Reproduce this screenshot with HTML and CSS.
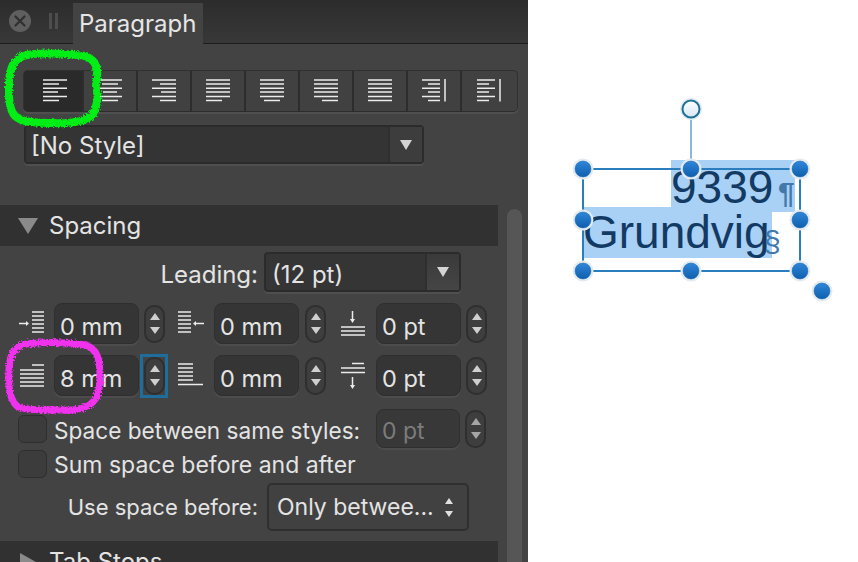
FILE: index.html
```html
<!DOCTYPE html>
<html lang="en">
<head>
<meta charset="utf-8">
<title>Paragraph</title>
<link rel="stylesheet" href="styles.css">
</head>
<body>
<div class="page">
  <aside class="panel">
    <header class="titlebar">
      <span class="close"><svg width="22" height="22" viewBox="0 0 22 22"><path d="M6.500 6.500l9 9M15.500 6.500l-9 9" stroke="#2f2f2f" stroke-width="2.200" stroke-linecap="round"/></svg></span>
      <span class="grip"></span>
      <div class="tab">Paragraph</div>
    </header>

    <div class="top">
      <div class="aligns">
        <button class="al al-first sel"><svg width="24" height="24" viewBox="0 0 24 24"><path d="M0 1h24M0 5h16M0 9.200h24M0 13h15M0 17.500h24M0 21.500h16"/></svg></button>
        <button class="al"><svg width="24" height="24" viewBox="0 0 24 24"><path d="M0 1h24M4 5h16M0 9.200h24M5 13h14M0 17.500h24M4 21.500h16"/></svg></button>
        <button class="al"><svg width="24" height="24" viewBox="0 0 24 24"><path d="M0 1h24M8 5h16M0 9.200h24M9 13h15M0 17.500h24M8 21.500h16"/></svg></button>
        <button class="al"><svg width="24" height="24" viewBox="0 0 24 24"><path d="M0 1h24M0 5h24M0 9.200h24M0 13h24M0 17.500h24M0 21.500h16"/></svg></button>
        <button class="al"><svg width="24" height="24" viewBox="0 0 24 24"><path d="M0 1h24M0 5h24M0 9.200h24M0 13h24M0 17.500h24M4 21.500h16"/></svg></button>
        <button class="al"><svg width="24" height="24" viewBox="0 0 24 24"><path d="M0 1h24M0 5h24M0 9.200h24M0 13h24M0 17.500h24M8 21.500h16"/></svg></button>
        <button class="al"><svg width="24" height="24" viewBox="0 0 24 24"><path d="M0 1h24M0 5h24M0 9.200h24M0 13h24M0 17.500h24M0 21.500h24"/></svg></button>
        <button class="al"><svg width="24" height="24" viewBox="0 0 24 24"><path d="M0 1h18M6 5h12M0 9.200h18M6 13h12M0 17.500h18M6 21.500h12M23 0v22.500"/></svg></button>
        <button class="al al-last"><svg width="24" height="24" viewBox="0 0 24 24"><path d="M0 1h18M0 5h12M0 9.200h18M0 13h12M0 17.500h18M0 21.500h12M23 0v22.500"/></svg></button>
      </div>
      <div class="select style-select">
        <span class="select-value">[No Style]</span>
        <span class="select-arrow"><i class="tri-down"></i></span>
      </div>
    </div>

    <section class="section-head"><i class="tri-open"></i><span>Spacing</span></section>

    <div class="spacing">
      <div class="leading-row">
        <label class="leading-label">Leading:</label>
        <div class="select leading-select">
          <span class="select-value">(12 pt)</span>
          <span class="select-arrow"><i class="tri-down"></i></span>
        </div>
      </div>

      <div class="grid">
        <svg class="ic" width="28" height="28" viewBox="0 0 28 28"><path d="M2 13.500h8M15 2h12M15 6h12M15 10h12M15 14h12M15 18h12M15 22h12"/><path class="fill" d="M12 13.500l-3-2.500v5z"/></svg>
        <div class="field">0 mm</div>
        <div class="stepper"><i class="up"></i><i class="dn"></i></div>
        <svg class="ic" width="28" height="28" viewBox="0 0 28 28"><path d="M1 2h13M1 6h13M1 10h13M1 14h13M1 18h13M1 22h13M18 13.500h9"/><path class="fill" d="M16 13.500l3-2.500v5z"/></svg>
        <div class="field">0 mm</div>
        <div class="stepper st2"><i class="up"></i><i class="dn"></i></div>
        <svg class="ic" width="26" height="28" viewBox="0 0 26 28"><path d="M12.500 1v9M1 17h24M1 21h24M1 25h24"/><path class="fill" d="M12.500 13l-2.500-4h5z"/></svg>
        <div class="field">0 pt</div>
        <div class="stepper"><i class="up"></i><i class="dn"></i></div>

        <svg class="ic" width="28" height="28" viewBox="0 0 28 28"><path d="M15 3h12M3 8h24M3 12h24M3 16h24M3 20h24M3 24h24"/></svg>
        <div class="field">8 mm</div>
        <div class="stepper focus"><i class="up"></i><i class="dn"></i></div>
        <svg class="ic" width="28" height="28" viewBox="0 0 28 28"><path d="M1 2h15M1 6h15M1 10h15M1 14h15M1 18h15M1 22.500h25"/></svg>
        <div class="field">0 mm</div>
        <div class="stepper st2"><i class="up"></i><i class="dn"></i></div>
        <svg class="ic" width="26" height="28" viewBox="0 0 26 28"><path d="M12 1.500h12M1 6h24M1 10.500h24M12.500 15v8"/><path class="fill" d="M12.500 27l-2.500-4h5z"/></svg>
        <div class="field">0 pt</div>
        <div class="stepper"><i class="up"></i><i class="dn"></i></div>
      </div>

      <div class="check-row first">
        <span class="check"></span>
        <span class="check-label">Space between same styles:</span>
        <div class="field off">0 pt</div>
        <div class="stepper off-st"><i class="up"></i><i class="dn"></i></div>
      </div>
      <div class="check-row second">
        <span class="check"></span>
        <span class="check-label">Sum space before and after</span>
      </div>
      <div class="use-row">
        <label class="use-label">Use space before:</label>
        <div class="popup">
          <span>Only betwee...</span>
          <span class="updown"><i class="up"></i><i class="dn"></i></span>
        </div>
      </div>
    </div>

    <section class="section-head closed"><i class="tri-closed"></i><span>Tab Stops</span></section>

    <div class="scrollbar"></div>

    <svg class="scribbles" width="528" height="562" viewBox="0 0 528 562">
      <defs>
        <filter id="rough" x="-10%" y="-10%" width="120%" height="120%">
          <feTurbulence type="fractalNoise" baseFrequency="0.6" numOctaves="2" seed="4"/>
          <feDisplacementMap in="SourceGraphic" scale="5"/>
        </filter>
      </defs>
      <path class="green" d="M96 85C99 70 98 61 85 56C66 53 42 53 27 55C13 58 10 68 9 82C9 94 8 108 15 116C24 124 36 122 52 123C68 124 84 123 93 114C97 106 98 98 97 91"/>
      <path class="magenta" d="M100 378C100 362 99 350 86 345C66 342 44 342 26 344C13 347 10 354 9 370C8 384 9 400 18 407C32 411 46 410 62 410C76 411 90 408 96 398C99 392 100 386 100 378"/>
    </svg>
  </aside>

  <main class="canvas">
    <div class="hl hl1"></div>
    <div class="hl hl2"></div>
    <div class="line line1">9339</div>
    <div class="line line2">Grundvig</div>
    <div class="mark pil">¶</div>
    <div class="mark sec">§</div>
    <svg class="frame" width="330" height="562" viewBox="528 0 330 562">
      <defs>
        <linearGradient id="blue" x1="0" y1="0" x2="0" y2="1">
          <stop offset="0" stop-color="#2f86d8"/>
          <stop offset="1" stop-color="#0f5fae"/>
        </linearGradient>
        <linearGradient id="pale" x1="0" y1="0" x2="0" y2="1">
          <stop offset="0" stop-color="#ffffff"/>
          <stop offset="1" stop-color="#d7e6f2"/>
        </linearGradient>
        <g id="h">
          <circle r="10.500" fill="#e3ebf0"/>
          <circle r="8" fill="url(#blue)" stroke="#1668b5" stroke-width=".5"/>
        </g>
      </defs>
      <path d="M691 118v51" stroke="#8db7da" stroke-width="2" fill="none"/>
      <rect x="583" y="169" width="217" height="102" fill="none" stroke="#2a7dbf" stroke-width="2"/>
      <circle cx="691" cy="109" r="11" fill="#e3ebf0"/>
      <circle cx="691" cy="109" r="8.500" fill="url(#pale)" stroke="#1d7099" stroke-width="2"/>
      <use href="#h" x="583" y="169"/><use href="#h" x="691" y="169"/><use href="#h" x="800" y="169"/>
      <use href="#h" x="583" y="220"/><use href="#h" x="800" y="220"/>
      <use href="#h" x="583" y="271"/><use href="#h" x="691" y="271"/><use href="#h" x="800" y="271"/>
      <use href="#h" x="822" y="291"/>
    </svg>
  </main>
</div>
</body>
</html>
```

FILE: styles.css
```css
* { box-sizing: border-box; }
html, body { margin: 0; padding: 0; }
body { font-family: Inter, "Liberation Sans", sans-serif; color: #e4e4e4; }
.page { display: flex; width: 858px; height: 562px; overflow: hidden; }

.panel { position: relative; width: 528px; height: 562px; flex: none; background: #434343; overflow: hidden; font-size: 23px; }
.canvas { position: relative; flex: 1; background: #fff; }

.titlebar { display: flex; align-items: flex-end; height: 44px; padding-left: 9px; background: linear-gradient(#2c2c2c, #383838); border-bottom: 1px solid #1d1d1d; }
.close { display: flex; width: 22px; height: 22px; margin-bottom: 11px; border-radius: 50%; background: #5f5f5f; }
.grip { width: 9px; height: 16px; margin: 0 15px 14px 18px; border-left: 3px solid #4d4d4d; border-right: 3px solid #4d4d4d; }
.tab { display: flex; align-items: center; height: 41px; width: 130px; margin-bottom: -1px; padding-left: 6px; background: #434343; font-size: 24px; color: #e6e6e6; }

.top { height: 161px; padding: 26px 0 0 23px; }
.aligns { display: flex; width: 495px; height: 42px; background: #2d2d2d; border-radius: 5px; border: 1px solid #303030; border-bottom-color: #2c2c2c; box-shadow: 0 2px 0 #4f4f4f; gap: 2px; overflow: hidden; }
.al { display: flex; align-items: center; justify-content: center; flex: none; width: 52px; padding: 0; border: 0; background: #414141; }
.al svg { fill: none; stroke: #ececec; stroke-width: 1.500; }
.al-first { width: 58px; padding-left: 3px; }
.al-last { width: 57px; padding-right: 4px; }
.sel { background: #2a2a2a; }

.select { display: flex; height: 39px; background: #353535; border: 2px solid #2b2b2b; border-radius: 4px; box-shadow: 0 2px 0 #4f4f4f; }
.select-value { flex: 1; padding-left: 6px; font-size: 24px; line-height: 38px; }
.select-arrow { display: flex; align-items: center; justify-content: center; width: 34px; background: #3d3d3d; border-left: 2px solid #2f2f2f; }
.tri-down { width: 0; height: 0; border-left: 6px solid transparent; border-right: 6px solid transparent; border-top: 10px solid #d4d4d4; }
.style-select { width: 400px; margin: 13px 0 0 1px; }
.style-select .select-value { padding-left: 5px; background: #343434; }

.section-head { display: flex; align-items: center; gap: 11px; width: 498px; height: 41px; padding-left: 18px; background: #313131; font-size: 24px; }
.tri-open { width: 0; height: 0; border-left: 10px solid transparent; border-right: 10px solid transparent; border-top: 16px solid #8a8a8a; }
.tri-closed { width: 0; height: 0; margin: 0 2px 0 2px; border-top: 9px solid transparent; border-bottom: 9px solid transparent; border-left: 16px solid #8a8a8a; }
.closed { margin-top: 10px; }

.spacing { width: 498px; }
.leading-row { display: flex; justify-content: flex-end; align-items: center; gap: 6px; width: 461px; height: 40px; margin-top: 6px; }
.leading-label { font-size: 24px; padding-top: 5px; }
.leading-select { width: 197px; height: 40px; }
.leading-select .select-value { line-height: 41px; }
.leading-select .select-arrow { background: linear-gradient(#3a3a3a, #454545); }

.grid { display: grid; grid-template-columns: 37px 85px 38px 37px 85px 41px 36px 85px 27px; grid-auto-rows: 41px; row-gap: 11px; align-items: center; margin-top: 11px; padding-left: 17px; }
.ic { fill: none; stroke: #ececec; stroke-width: 1.500; }
.ic .fill { fill: #ececec; stroke: none; }

.field { display: flex; align-items: center; height: 41px; padding: 5px 0 0 5px; font-size: 23.500px; background: #353535; border-radius: 8px; border: 1px solid #2f2f2f; box-shadow: 0 2px 0 #4c4c4c; }
.stepper { position: relative; display: flex; flex-direction: column; align-items: center; justify-content: center; gap: 7px; width: 21px; height: 38px; margin-left: 5px; border-radius: 10px; border: 2px solid #2f2f2f; background: #3e3e3e; }
.st2 { margin-left: 6px; }
.up { width: 0; height: 0; border-left: 5px solid transparent; border-right: 5px solid transparent; border-bottom: 7px solid #cfcfcf; }
.dn { width: 0; height: 0; border-left: 5px solid transparent; border-right: 5px solid transparent; border-top: 7px solid #cfcfcf; }
.focus::after { content: ""; position: absolute; left: -6px; right: -5px; top: -5px; bottom: -5px; border: 3px solid #1f6d9c; }

.check-row { display: flex; align-items: center; padding-left: 18px; }
.check-row.first { height: 39px; margin-top: 13px; }
.check-row.second { height: 28px; margin-top: 2px; }
.check { flex: none; width: 29px; height: 28px; border-radius: 6px; background: #3c3c3c; border: 1px solid #2e2e2e; }
.check-label { margin-left: 7px; padding-top: 3px; white-space: nowrap; }
.second .check-label { padding-top: 1px; }
.first .check-label { width: 322px; font-size: 22.600px; }
.field.off { width: 84px; height: 39px; font-size: 23px; color: #7c7c7c; background: #383838; }
.off-st { margin-left: 5px; color: #999; }
.off-st .up { border-bottom-color: #a5a5a5; }
.off-st .dn { border-top-color: #a5a5a5; }

.use-row { display: flex; align-items: center; height: 48px; margin-top: 5px; }
.use-label { width: 267px; padding-right: 9px; font-size: 22px; text-align: right; white-space: nowrap; }
.popup { display: flex; align-items: center; justify-content: space-between; width: 202px; height: 48px; padding: 0 14px 0 8px; border: 2px solid #2f2f2f; border-radius: 5px; background: #414141; }
.updown { display: flex; flex-direction: column; gap: 7px; }
.updown .up { border-left-width: 4px; border-right-width: 4px; border-bottom: 6px solid #e0e0e0; }
.updown .dn { border-left-width: 4px; border-right-width: 4px; border-top: 6px solid #e0e0e0; }

.scrollbar { position: absolute; left: 507px; top: 209px; width: 15px; height: 353px; border-radius: 8px 8px 0 0; background: #565656; }

.scribbles { position: absolute; left: 0; top: 0; fill: none; stroke-linecap: round; pointer-events: none; }
.green { stroke: #06ee14; stroke-width: 8; filter: url(#rough); }
.magenta { stroke: #f032ee; stroke-width: 7; filter: url(#rough); }

.hl { position: absolute; background: #a9d0f5; }
.hl1 { left: 143px; top: 160px; width: 124px; height: 52px; }
.hl2 { left: 55px; top: 207px; width: 189px; height: 51px; }
.line { position: absolute; font-family: "Liberation Sans", sans-serif; font-size: 46px; line-height: 50px; color: #123a63; white-space: nowrap; }
.line1 { left: 143px; top: 162px; }
.line2 { left: 55px; top: 207px; }
.mark { position: absolute; font-family: "Liberation Sans", sans-serif; color: #4379aa; line-height: 30px; }
.pil { left: 250px; top: 178px; font-size: 30px; font-weight: 700; }
.sec { left: 236px; top: 227px; font-size: 30px; }
.frame { position: absolute; left: 0; top: 0; }
```
